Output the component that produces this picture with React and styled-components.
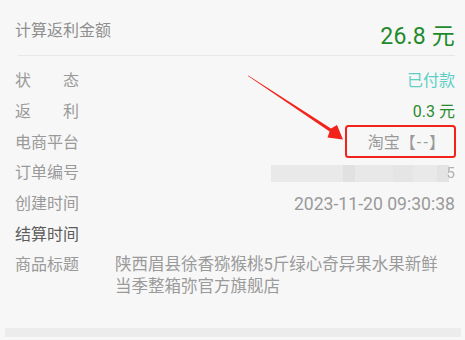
import React from "react";
import styled, { createGlobalStyle } from "styled-components";

const Global = createGlobalStyle`
  html, body { margin: 0; padding: 0; background: #f7f7f7; }
  #root { width: 465px; height: 340px; overflow: hidden; }
`;

const Root = styled.div`
  position: relative;
  width: 465px;
  height: 340px;
  display: flex;
  flex-direction: column;
  background: #f7f7f7;
  font-family: Roboto, "Noto Sans CJK SC", sans-serif;
`;

const Card = styled.div`
  padding: 0 10px 0 15px;
  display: flex;
  flex-direction: column;
`;

const Header = styled.div`
  display: flex;
  justify-content: space-between;
  align-items: flex-start;
  padding-top: 20px;
  height: 35px;
`;

const HeaderLabel = styled.div`
  font-size: 16px;
  line-height: 22px;
  color: #8f8f8f;
`;

const Amount = styled.div`
  margin-top: 2px;
  font-size: 23px;
  line-height: 30px;
  color: #1f8a2c;
  letter-spacing: 0.2px;
`;

const Divider = styled.div`
  height: 1px;
  margin: 0 0 10px 3px;
  background: #e7e7e7;
`;

const Row = styled.div`
  display: flex;
  align-items: ${(p) => (p.$top ? "flex-start" : "center")};
  min-height: 30.7px;
  padding-top: ${(p) => (p.$top ? "4px" : "0")};
  box-sizing: border-box;
`;

const LabelCol = styled.div`
  width: 100px;
  flex: none;
  line-height: 22px;
`;

const Label = styled.span`
  display: inline-block;
  width: 64px;
  font-size: 16px;
  color: ${(p) => (p.$dark ? "#5c5c5c" : "#9a9a9a")};
  text-align: justify;
  text-align-last: justify;
`;

const Value = styled.div`
  flex: 1;
  text-align: ${(p) => (p.$left ? "left" : "right")};
  font-size: ${(p) => p.$size || "16px"};
  line-height: 22px;
  color: ${(p) => p.$color || "#9a9a9a"};
  padding-right: ${(p) => p.$inset || "0px"};
`;

const Dashes = styled.span`
  letter-spacing: 2.5px;
  margin-right: -2.5px;
  padding: 0 1px;
`;

const Blurred = styled.div`
  flex: 1;
  display: flex;
  justify-content: flex-end;
  align-items: center;
  height: 22px;
`;

const BlurStrip = styled.div`
  position: relative;
  width: 178px;
  height: 17px;
  display: flex;
  filter: blur(0.6px);
`;

const Tile = styled.div`
  flex: ${(p) => p.$w};
  background: ${(p) => p.$c};
`;

const TailDigit = styled.span`
  font-size: 15px;
  line-height: 17px;
  color: #b0b0b0;
  margin-left: -2px;
  filter: blur(0.4px);
`;

const BottomBar = styled.div`
  margin: auto 4px 3px 5px;
  height: 9px;
  background: #ececec;
`;

const Overlay = styled.svg`
  position: absolute;
  left: 0;
  top: 0;
  width: 465px;
  height: 340px;
  pointer-events: none;
`;

const rows = [
  { label: "状态", value: "已付款", color: "#5ccfc6" },
  { label: "返利", value: "0.3 元", color: "#2a8a2e" },
  {
    label: "电商平台",
    value: (
      <>
        淘宝【<Dashes>--</Dashes>】
      </>
    ),
    color: "#9a9a9a",
    inset: "10px",
  },
];

export default function App() {
  return (
    <Root>
      <Global />
      <Card>
        <Header>
          <HeaderLabel>计算返利金额</HeaderLabel>
          <Amount>26.8 元</Amount>
        </Header>
        <Divider />
        {rows.map((r) => (
          <Row key={r.label}>
            <LabelCol>
              <Label>{r.label}</Label>
            </LabelCol>
            <Value $color={r.color} $inset={r.inset}>
              {r.value}
            </Value>
          </Row>
        ))}
        <Row>
          <LabelCol>
            <Label>订单编号</Label>
          </LabelCol>
          <Blurred>
            <BlurStrip>
              <Tile $w={72} $c="#e9e9e9" />
              <Tile $w={12} $c="#e1e1e1" />
              <Tile $w={38} $c="#e8e8e8" />
              <Tile $w={20} $c="#e5e5e5" />
              <Tile $w={24} $c="#e9e9e9" />
              <Tile $w={12} $c="#e3e3e3" />
            </BlurStrip>
            <TailDigit>5</TailDigit>
          </Blurred>
        </Row>
        <Row>
          <LabelCol>
            <Label>创建时间</Label>
          </LabelCol>
          <Value $size="17.6px">2023-11-20 09:30:38</Value>
        </Row>
        <Row>
          <LabelCol>
            <Label $dark>结算时间</Label>
          </LabelCol>
          <Value />
        </Row>
        <Row $top>
          <LabelCol>
            <Label>商品标题</Label>
          </LabelCol>
          <Value $left $size="16.5px">
            陕西眉县徐香猕猴桃5斤绿心奇异果水果新鲜
            <br />
            当季整箱弥官方旗舰店
          </Value>
        </Row>
      </Card>
      <BottomBar />
      <Overlay viewBox="0 0 465 340">
        <polygon
          points="248,76 248.3,75.6 331,128.6 337,125 343,139.5 327.5,137.5 329.6,131.4"
          fill="#f2231b"
        />
        <rect
          x="346"
          y="126"
          width="109"
          height="31"
          rx="2.5"
          fill="none"
          stroke="#f2231b"
          strokeWidth="2"
        />
      </Overlay>
    </Root>
  );
}
